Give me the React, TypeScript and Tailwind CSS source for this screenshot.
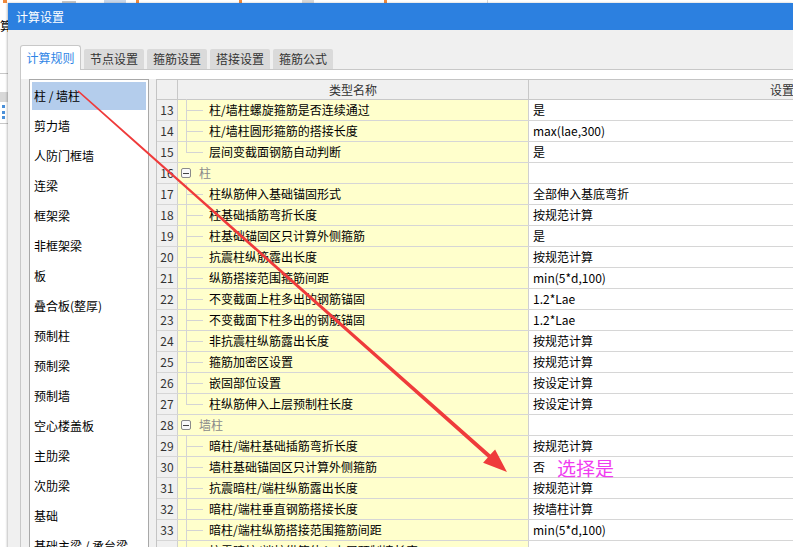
import React from "react";

type Row = { n: number; name: string; value?: string; kind: "child" | "last" | "group" };

const rows: Row[] = [
  { n: 13, name: "柱/墙柱螺旋箍筋是否连续通过", value: "是", kind: "child" },
  { n: 14, name: "柱/墙柱圆形箍筋的搭接长度", value: "max(lae,300)", kind: "child" },
  { n: 15, name: "层间变截面钢筋自动判断", value: "是", kind: "last" },
  { n: 16, name: "柱", kind: "group" },
  { n: 17, name: "柱纵筋伸入基础锚固形式", value: "全部伸入基底弯折", kind: "child" },
  { n: 18, name: "柱基础插筋弯折长度", value: "按规范计算", kind: "child" },
  { n: 19, name: "柱基础锚固区只计算外侧箍筋", value: "是", kind: "child" },
  { n: 20, name: "抗震柱纵筋露出长度", value: "按规范计算", kind: "child" },
  { n: 21, name: "纵筋搭接范围箍筋间距", value: "min(5*d,100)", kind: "child" },
  { n: 22, name: "不变截面上柱多出的钢筋锚固", value: "1.2*Lae", kind: "child" },
  { n: 23, name: "不变截面下柱多出的钢筋锚固", value: "1.2*Lae", kind: "child" },
  { n: 24, name: "非抗震柱纵筋露出长度", value: "按规范计算", kind: "child" },
  { n: 25, name: "箍筋加密区设置", value: "按规范计算", kind: "child" },
  { n: 26, name: "嵌固部位设置", value: "按设定计算", kind: "child" },
  { n: 27, name: "柱纵筋伸入上层预制柱长度", value: "按设定计算", kind: "last" },
  { n: 28, name: "墙柱", kind: "group" },
  { n: 29, name: "暗柱/端柱基础插筋弯折长度", value: "按规范计算", kind: "child" },
  { n: 30, name: "墙柱基础锚固区只计算外侧箍筋", value: "否", kind: "child" },
  { n: 31, name: "抗震暗柱/端柱纵筋露出长度", value: "按规范计算", kind: "child" },
  { n: 32, name: "暗柱/端柱垂直钢筋搭接长度", value: "按墙柱计算", kind: "child" },
  { n: 33, name: "暗柱/端柱纵筋搭接范围箍筋间距", value: "min(5*d,100)", kind: "child" },
  { n: 34, name: "抗震暗柱/端柱纵筋伸入上层预制墙长度", kind: "child" },
];

const listItems = [
  "柱 / 墙柱",
  "剪力墙",
  "人防门框墙",
  "连梁",
  "框架梁",
  "非框架梁",
  "板",
  "叠合板(整厚)",
  "预制柱",
  "预制梁",
  "预制墙",
  "空心楼盖板",
  "主肋梁",
  "次肋梁",
  "基础",
  "基础主梁 / 承台梁",
];

const tabs = ["节点设置", "箍筋设置", "搭接设置", "箍筋公式"];

function TableRow({ r }: { r: Row }) {
  return (
    <div className="flex h-[21px] shrink-0 border-b border-[#d6d6d6]">
      <div className="flex w-[21px] shrink-0 items-center justify-center border-r border-[#d0d0d0] bg-[#f0f0f0] text-[12px] text-[#333]">
        {r.n}
      </div>
      <div className="relative flex w-[351px] shrink-0 items-center border-r border-[#d0d0d0] bg-[#ffffcc] text-[12px] text-black">
        {r.kind === "group" ? (
          <>
            <span className="absolute left-[3px] top-[5px] flex h-[10px] w-[10px] items-center justify-center rounded-[2px] border border-[#8a8a8a] bg-[#fafafa]">
              <span className="h-px w-[6px] bg-[#444]" />
            </span>
            <span className="pl-[21px] text-[#8a8a8a]">{r.name}</span>
          </>
        ) : (
          <>
            <span
              className={
                r.kind === "last"
                  ? "absolute left-[8px] top-[-1px] h-[11px] w-px bg-[#d4d4d4]"
                  : "absolute left-[8px] top-[-1px] bottom-[-1px] w-px bg-[#d4d4d4]"
              }
            />
            <span className="absolute left-[8px] top-[10px] h-px w-[17px] bg-[#d4d4d4]" />
            <span className="pl-[31px] whitespace-nowrap">{r.name}</span>
          </>
        )}
      </div>
      <div className="flex w-[518px] shrink-0 items-center bg-white pl-[4px] text-[12px] text-black whitespace-nowrap">
        {r.value ?? ""}
        {r.n === 30 && (
          <span className="ml-[12px] text-[19px] leading-none text-[#f03cf0]">选择是</span>
        )}
      </div>
    </div>
  );
}

export default function App() {
  return (
    <div className="relative h-[547px] w-[793px] overflow-hidden bg-white font-['Noto_Sans_CJK_SC','Noto_Sans',sans-serif]">
      {/* background application strip */}
      <div className="flex h-[3px] items-center bg-white">
        <span className="ml-[3px] h-[3px] w-[4px] bg-[#f08a3c]" />
        <span className="ml-[55px] h-[2px] w-[14px] bg-[#c8c8c8]" />
        <span className="ml-[28px] h-[3px] w-[22px] bg-[#c9d7ea]" />
        <span className="ml-[10px] h-[3px] w-[3px] bg-[#f08a3c]" />
        <span className="ml-[100px] h-[3px] w-[3px] bg-[#f08a3c]" />
        <span className="ml-[60px] h-[3px] w-[12px] bg-[#d8d8d8]" />
        <span className="ml-[70px] h-[3px] w-[3px] bg-[#f08a3c]" />
        <span className="ml-[100px] h-[3px] w-px bg-[#d8d8d8]" />
      </div>
      <div className="flex">
        {/* left background strip */}
        <div className="flex w-[8px] shrink-0 flex-col bg-white">
          <div className="h-[16px]" />
          <div className="h-[14px] overflow-hidden text-[12px] leading-[14px] text-black">算</div>
          <div className="h-[40px]" />
          <div className="h-px bg-[#c8c8c8]" />
          <div className="h-[18px] bg-white" />
          <div className="h-[10px] bg-[#d8d8d8]" />
          <div className="ml-[2px] mt-[3px] flex h-[14px] w-[3px] flex-col justify-between">
            <span className="h-[3px] w-[3px] bg-[#4a90d9]" />
            <span className="h-[3px] w-[3px] bg-[#4a90d9]" />
            <span className="h-[3px] w-[3px] bg-[#4a90d9]" />
          </div>
          <div className="mt-[4px] h-px bg-[#c8c8c8]" />
        </div>
        {/* dialog */}
        <div className="flex min-w-0 flex-1 flex-col bg-[#f0f0f0] shadow-[-1px_0_2px_rgba(0,0,0,0.25)]">
          <div className="flex h-[27px] items-center bg-[#2c80e0] pl-[8px] text-[12px] text-white">
            计算设置
          </div>
          <div className="flex h-[540px] flex-col pl-[12px] pt-[15px]">
            {/* tabs */}
            <div className="flex h-[25px] items-end gap-[3px]">
              <div className="relative z-10 flex h-[25px] w-[61px] items-center justify-center rounded-t-[3px] border border-b-0 border-[#c8c8c8] bg-white text-[12px] text-[#2f85e6]">
                计算规则
              </div>
              {tabs.map((t) => (
                <div
                  key={t}
                  className="flex h-[21px] w-[60px] items-center justify-center rounded-t-[2px] bg-[#dadada] pb-[1px] text-[12px] text-[#333]"
                >
                  {t}
                </div>
              ))}
            </div>
            {/* panel */}
            <div className="-mt-px flex flex-1 flex-col border-l border-t border-[#c8c8c8] bg-white">
              <div className="h-[9px] shrink-0 bg-white" />
              <div className="flex flex-1 bg-[#f0f0f0] pl-[8px]">
                {/* left list */}
                <div className="flex h-[520px] w-[120px] shrink-0 flex-col gap-[2px] border border-[#a8a8a8] bg-white p-px">
                  {listItems.map((it, i) => (
                    <div
                      key={it}
                      className={
                        i === 0
                          ? "mx-px mt-px flex h-[28px] shrink-0 items-center bg-[#b4cdec] pl-[2px] text-[12px] text-black whitespace-nowrap"
                          : "mx-px flex h-[28px] shrink-0 items-center pl-[2px] text-[12px] text-black whitespace-nowrap"
                      }
                    >
                      {it}
                    </div>
                  ))}
                </div>
                {/* table */}
                <div className="ml-[7px] flex min-w-0 flex-1 flex-col overflow-hidden border-l border-t border-[#c4c4c4] bg-white">
                  <div className="flex h-[20px] shrink-0 border-b border-[#c8c8c8] bg-[#f0f0f0] text-[12px] text-[#333]">
                    <div className="w-[21px] shrink-0 border-r border-[#c8c8c8]" />
                    <div className="flex w-[351px] shrink-0 items-center justify-center border-r border-[#c8c8c8]">
                      类型名称
                    </div>
                    <div className="flex w-[518px] shrink-0 items-center justify-center">设置值</div>
                  </div>
                  {rows.map((r) => (
                    <TableRow key={r.n} r={r} />
                  ))}
                </div>
              </div>
            </div>
          </div>
        </div>
      </div>
      {/* red annotation arrow */}
      <svg
        className="pointer-events-none absolute left-0 top-0"
        width="793"
        height="547"
        viewBox="0 0 793 547"
      >
        <polygon
          points="77.4,91.6 78.6,90.4 490.4,454.6 495.1,449.4 507,472 483.1,462.8 487.8,457.6"
          fill="#ef3b3b"
        />
      </svg>
    </div>
  );
}
